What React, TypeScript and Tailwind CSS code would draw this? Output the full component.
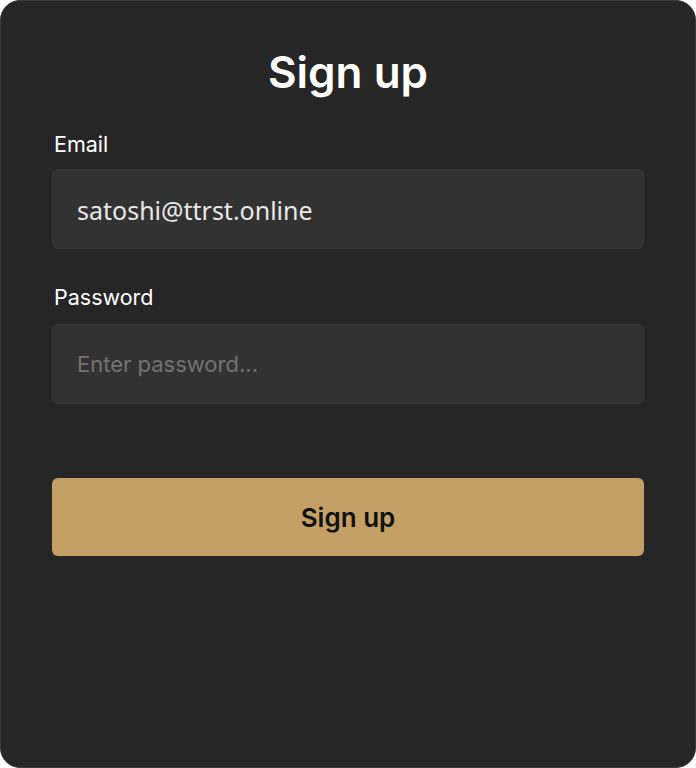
export default function App() {
  return (
    <div className="w-[696px] h-[768px] bg-white">
      <div
        className="w-[696px] h-[768px] bg-[#262626] border border-[#3a3a3a] rounded-[20px] px-[51px] pt-[46px] flex flex-col"
        style={{ fontFamily: "Inter, 'Noto Sans', sans-serif" }}
      >
        <h1 className="text-center text-[44px] leading-[50px] font-semibold text-white">Sign up</h1>
        <label className="mt-[33px] text-[21.5px] leading-[28px] text-white pl-[2px]">Email</label>
        <div className="mt-[11px] h-[80px] rounded-[6px] bg-[#323232] border border-[#383838] flex items-center px-[24px]">
          <span
            className="text-[25px] text-[#e8e8e8] pt-[4px]"
            style={{ fontFamily: "'Noto Sans', sans-serif" }}
          >
            satoshi@ttrst.online
          </span>
        </div>
        <label className="mt-[34px] text-[21.5px] leading-[28px] text-white pl-[2px]">Password</label>
        <div className="mt-[13px] h-[80px] rounded-[6px] bg-[#323232] border border-[#383838] flex items-center px-[24px]">
          <span className="text-[22px] text-[#737373]">Enter password...</span>
        </div>
        <button className="mt-[74px] h-[78px] rounded-[6px] bg-[#c4a066] flex items-center justify-center">
          <span className="text-[26px] font-semibold text-[#111111]">Sign up</span>
        </button>
      </div>
    </div>
  );
}
